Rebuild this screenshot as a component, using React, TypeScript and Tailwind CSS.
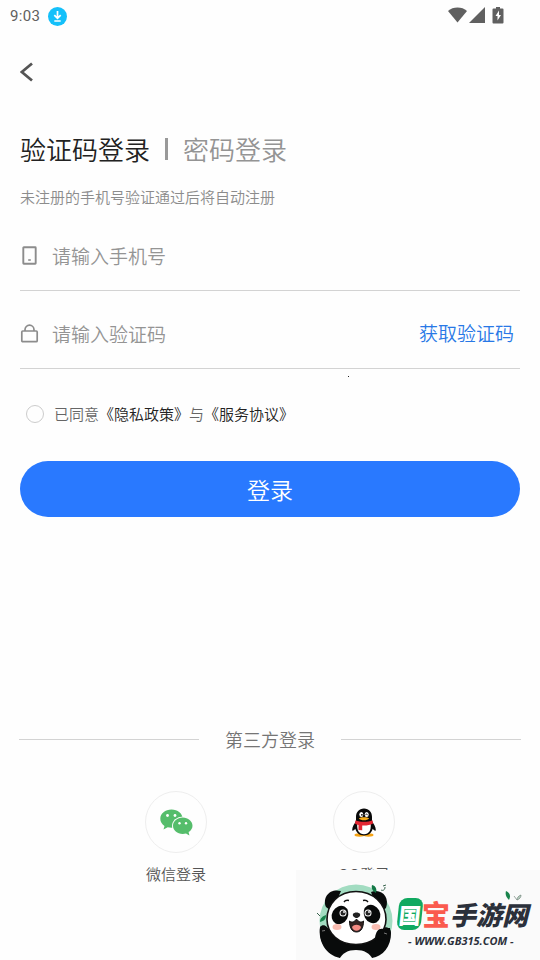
import { useState } from 'react';

function StatusBar() {
  return (
    <div className="flex h-8 items-center justify-between pl-[10px] pr-[35px] text-[#606060]">
      <div className="flex items-center gap-2">
        <span className="font-[Roboto,sans-serif] text-[15px] font-normal leading-5 tracking-wide">9:03</span>
        <svg width="19" height="19" viewBox="0 0 19 19" aria-hidden="true">
          <circle cx="9.5" cy="9.5" r="9.5" fill="#14c0fa" />
          <path d="M9.5 4v7M6.3 8.2l3.2 3.2 3.2-3.2M6.3 14h6.4" fill="none" stroke="#fff" strokeWidth="1.7" />
        </svg>
      </div>
      <svg width="57" height="18" viewBox="0 0 57 18" fill="#606060" aria-hidden="true">
        <path d="M0 4C5-.6 14-.6 19 4L9.500 15.500z" />
        <path d="M37 0v16H21z" />
        <path d="M48 0h4v1.500h2.500q1 0 1 1v13q0 1-1 1h-9q-1 0-1-1v-13q0-1 1-1H48z" />
        <path d="M51 3.500l-3.500 5.500h2v4.500L53 8h-2z" fill="#fff" />
      </svg>
    </div>
  );
}

function PhoneIcon() {
  return (
    <svg width="19" height="20" viewBox="0 0 19 20" fill="none" stroke="#8c8c8c" aria-hidden="true">
      <rect x="3.300" y="1.300" width="12.400" height="16.400" rx="0.500" strokeWidth="1.900" />
      <path d="M8.200 14h2.600" strokeWidth="1.600" />
    </svg>
  );
}

function LockIcon() {
  return (
    <svg width="19" height="20" viewBox="0 0 19 20" fill="none" stroke="#8c8c8c" strokeWidth="1.700" aria-hidden="true">
      <rect x="1.800" y="7" width="15.400" height="10.700" rx="1" />
      <path d="M5 7V5.700a4.500 4.500 0 0 1 9 0V7" />
    </svg>
  );
}

function WeChatIcon() {
  return (
    <svg width="33" height="27" viewBox="0 0 33 27" aria-hidden="true">
      <path d="M11.500.5C5.200.5.300 4.600.300 9.700c0 3 1.600 5.500 4.200 7.200l-1 3.600 4.200-2.200c1.200.3 2.500.5 3.800.5 6.200 0 11.200-4.100 11.200-9.100S17.700.5 11.500.5z" fill="#55bd6b" />
      <ellipse cx="22.800" cy="17" rx="10.800" ry="9.600" fill="#fdfdfd" />
      <path d="M22.700 8.500c-5.400 0-9.700 3.700-9.700 8.200s4.300 8.200 9.700 8.200c1.200 0 2.300-.2 3.300-.5l3.400 2-.8-3.300c2.300-1.500 3.900-3.800 3.900-6.400 0-4.500-4.400-8.200-9.800-8.200z" fill="#55bd6b" />
      <g fill="#fff">
        <circle cx="7.500" cy="6.500" r="1.400" />
        <circle cx="15" cy="6.500" r="1.400" />
        <circle cx="19.500" cy="14.200" r="1.200" />
        <circle cx="26" cy="14.200" r="1.200" />
      </g>
    </svg>
  );
}

function QQIcon() {
  return (
    <svg width="24" height="29" viewBox="0 0 24 29" aria-hidden="true">
      <ellipse cx="7.500" cy="27" rx="5" ry="1.700" fill="#f5a315" />
      <ellipse cx="16.500" cy="27" rx="5" ry="1.700" fill="#f5a315" />
      <path d="M12 .5c-5 0-8 3.600-8 8.500v4C2.200 16-.2 19.700.3 22.300c.3 1.500 2-.3 3-1.500C4.500 25 7.500 27.500 12 27.500s7.500-2.500 8.700-6.700c1 1.200 2.700 3 3 1.500.5-2.600-1.900-6.300-3.700-9.300V9c0-4.900-3-8.500-8-8.500z" fill="#090909" />
      <path d="M5.300 16h13.400c.6 6-1.700 10.300-6.700 10.300S4.700 22 5.300 16z" fill="#fff" />
      <path d="M3.500 12.300c5 2 12 2 17 0l.5 3.200c-3 1.700-7 2.300-10.800 2v4.800l-3.700-.3v-5c-1.500-.3-2.500-.8-3.500-1.500z" fill="#e32632" />
      <ellipse cx="9.300" cy="6.500" rx="2" ry="2.500" fill="#fff" />
      <ellipse cx="14.700" cy="6.500" rx="2" ry="2.500" fill="#fff" />
      <circle cx="9.900" cy="6.800" r="0.900" />
      <path d="M13.500 7.200c.3-1.500 1.800-1.500 2.100 0" fill="none" stroke="#111" strokeWidth="0.800" />
      <path d="M6.800 10.500c2-1.700 8.400-1.700 10.400 0-2 2.400-8.400 2.400-10.400 0z" fill="#f6ac19" />
    </svg>
  );
}

function Panda() {
  return (
    <svg className="shrink-0" width="98" height="90" viewBox="0 0 98 90" aria-hidden="true">
      <circle cx="60" cy="51" r="36.500" fill="#a2dcc1" />
      <path d="M24 58c-1 13 4 24 24 31h24c20-7 24-18 22-31z" fill="#090b0b" />
      <path d="M24 57c3-4 8-1 9 4l8 11h38l5-13c4-3 11-2 11 4 0 14-8 23-19 25H44c-14-3-22-16-20-31z" fill="#090b0b" />
      <path d="M43 90c3-7 9-10 17-10s14 3 17 10z" fill="#fafafa" />
      <path d="M30 37c-4-10 4-19 15-16l-3 7-8 12zM90 38c4-10-4-20-15-16l3 8 8 11z" fill="#090b0b" />
      <path d="M60 21.500c-17 0-29 12-29 28 0 14 12 25 29 25s30-12 30-25c0-16-13-28-30-28z" fill="#fff" stroke="#111" strokeWidth="1.600" />
      <ellipse cx="44" cy="45" rx="8" ry="9.500" transform="rotate(28 44 45)" fill="#080a0a" />
      <ellipse cx="76" cy="44" rx="8" ry="9.500" transform="rotate(-28 76 44)" fill="#080a0a" />
      <circle cx="47" cy="43" r="3.500" fill="#fff" />
      <circle cx="72" cy="43" r="3.500" fill="#fff" />
      <circle cx="47" cy="43" r="2.500" fill="#252525" />
      <circle cx="72" cy="43" r="2.500" fill="#252525" />
      <circle cx="48" cy="42" r="0.900" fill="#fff" />
      <circle cx="73" cy="42" r="0.900" fill="#fff" />
      <path d="M48 32c1-1.500 3-2 5-1.500M67 30.500c2-.5 4 0 5 1.500" fill="none" stroke="#111" strokeWidth="1.400" />
      <path d="M57 44c1-2 6-2 7 0s-2 4-3.500 4-4.500-2-3.500-4z" fill="#222" />
      <path d="M53.500 51c2.500 2 5 1 7-2 2 3 4.500 4 7 2 0 6-2 11-7 11s-7-5-7-11z" fill="#352321" stroke="#111" />
      <path d="M56 57c2-3 7-3 9 0-1 5-8 5-9 0z" fill="#f58b83" />
      <ellipse cx="41" cy="57" rx="4.500" ry="3" fill="#f9bcb1" />
      <ellipse cx="80" cy="57" rx="4.500" ry="3" fill="#f9bcb1" />
      <path d="M79 68c1-7 4-10 8-9 5 1 7 6 5 13z" fill="#090b0b" />
      <path d="M26 61l3-.5M88 63l3 1" stroke="#777" />
      <path d="M24 52c0-4 3-6 6-7 0 4-2 6-6 7z" fill="#17824b" />
      <path d="M21 43l3 3M85 20c2 1 4 0 4-3M87 16l3-1" stroke="#36634c" fill="none" />
      <path d="M76 15c4 1 5 4 4 8-3-2-5-4-4-8z" fill="#137846" />
    </svg>
  );
}

function Watermark() {
  return (
    <div className="absolute bottom-0 right-0 flex h-[90px] w-[244px] overflow-hidden bg-[#fafafa] font-['Noto_Sans_CJK_SC',sans-serif]">
      <Panda />
      <div className="flex grow flex-col pt-[26px]">
        <div className="flex h-9 items-center text-[26px] font-black italic leading-9 text-[#2b303b]">
          <span className="ml-1 flex h-8 w-6 shrink-0 -skew-x-6 items-center justify-center rounded-lg bg-[#10a960] text-[22px] not-italic text-white">国</span>
          <span className="shrink-0 text-[28px] not-italic text-[#fa5a4e]">宝</span>
          <span className="shrink-0">手游网</span>
        </div>
        <span className="pl-[14px] font-['Open_Sans',sans-serif] text-[11px] font-bold italic leading-[18px] text-[#2b303b]">- WWW.GB315.COM -</span>
      </div>
      <svg className="absolute right-4 top-5" width="20" height="12" viewBox="0 0 20 12" aria-hidden="true">
        <path d="M2 1c4 2 5 5 3 9C2 7 1 4 2 1z" fill="#18834b" />
        <path d="M10 6l3 4M13 10c3-1 4-3 4-5-3 1-4 3-4 5z" fill="#b7cfc1" stroke="#72857b" strokeWidth="0.700" />
      </svg>
    </div>
  );
}

export default function App() {
  const [agreed, setAgreed] = useState(false);

  return (
    <div className="relative min-h-screen overflow-hidden bg-[#fefefe] font-['Noto_Sans_CJK_SC',sans-serif] font-[350]">
      <StatusBar />
      <main className="px-5">
        <header className="flex h-20 items-center">
          <button type="button" aria-label="返回">
            <svg width="13" height="20" viewBox="0 0 13 20" aria-hidden="true">
              <path d="M12 1.500L1.800 10 12 18.500" fill="none" stroke="#555" strokeWidth="2.800" />
            </svg>
          </button>
        </header>

        <div className="mt-[17px] flex h-10 items-center text-[26px] leading-10">
          <button type="button" className="text-[#222]">验证码登录</button>
          <span className="mx-[15px] h-[22px] w-[3px] bg-[#999]" />
          <button type="button" className="text-[#949494]">密码登录</button>
        </div>
        <p className="mt-4 text-[15px] leading-6 text-[#8c8c8c]">未注册的手机号验证通过后将自动注册</p>

        <form onSubmit={(event) => event.preventDefault()}>
          <div className="mt-3 flex h-[70px] items-center gap-[13px] border-b border-[#d3d3d3]">
            <label htmlFor="phone" aria-label="手机号"><PhoneIcon /></label>
            <input id="phone" type="tel" placeholder="请输入手机号" className="h-10 min-w-0 grow bg-transparent text-[19px] text-[#222] outline-none placeholder:text-[#949494]" />
          </div>
          <div className="relative mt-2 flex h-[70px] items-center gap-[13px] border-b border-[#d3d3d3]">
            <label htmlFor="code" aria-label="验证码"><LockIcon /></label>
            <input id="code" type="text" placeholder="请输入验证码" className="h-10 min-w-0 grow bg-transparent text-[19px] text-[#222] outline-none placeholder:text-[#949494]" />
            <button type="button" className="mr-[6px] shrink-0 text-[19px] text-[#2878e6]">获取验证码</button>
            <span className="absolute -bottom-[9px] right-[171px] size-px bg-[#222]" />
          </div>

          <div className="mt-[33px] flex h-6 items-center pl-[6px] text-[15px] leading-6 text-[#666]">
            <input id="agree" type="checkbox" checked={agreed} onChange={() => setAgreed(!agreed)} className="mr-[10px] size-[18px] appearance-none rounded-full border border-[#ccc] checked:bg-[#2979ff]" />
            <label htmlFor="agree">已同意</label>
            <a href="#privacy" className="text-[#222]">《隐私政策》</a>
            <span>与</span>
            <a href="#service" className="text-[#222]">《服务协议》</a>
          </div>

          <button type="submit" className="mt-[35px] h-14 w-full rounded-full bg-[#2979ff] text-[23px] text-white">登录</button>
        </form>

        <section className="mt-[210px]">
          <div className="-mx-px flex h-6 items-center gap-[26px]">
            <span className="h-px grow bg-[#d3d3d3]" />
            <h2 className="text-[18px] leading-6 text-[#757575]">第三方登录</h2>
            <span className="h-px grow bg-[#d3d3d3]" />
          </div>
          <div className="mx-auto mt-10 grid w-[376px] max-w-full grid-cols-2 justify-items-center text-[15px] leading-6 text-[#555]">
            <button type="button" className="flex flex-col items-center gap-[9px]">
              <span className="flex size-[62px] items-center justify-center rounded-full border border-[#eee]"><WeChatIcon /></span>
              <span>微信登录</span>
            </button>
            <button type="button" className="flex flex-col items-center gap-[9px]">
              <span className="flex size-[62px] items-center justify-center rounded-full border border-[#eee]"><QQIcon /></span>
              <span>QQ登录</span>
            </button>
          </div>
        </section>
      </main>
      <Watermark />
    </div>
  );
}
